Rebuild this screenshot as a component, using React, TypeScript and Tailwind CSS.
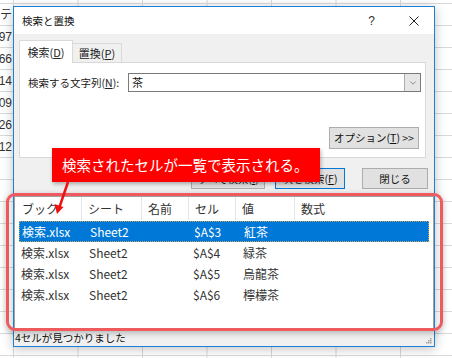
import { ChevronDown } from 'lucide-react';

const rows = [
  { book: '検索.xlsx', sheet: 'Sheet2', cell: '$A$3', value: '紅茶' },
  { book: '検索.xlsx', sheet: 'Sheet2', cell: '$A$4', value: '緑茶' },
  { book: '検索.xlsx', sheet: 'Sheet2', cell: '$A$5', value: '烏龍茶' },
  { book: '検索.xlsx', sheet: 'Sheet2', cell: '$A$6', value: '檸檬茶' },
];

const sideCells = ['テ', '97', '66', '14', '09', '26', '12'];

export default function App() {
  return (
    <div className="relative w-[452px] h-[358px] overflow-hidden flex items-start bg-white bg-[linear-gradient(to_right,#d9d9d9_1px,transparent_1px),linear-gradient(to_bottom,#d9d9d9_1px,transparent_1px)] bg-[length:64.5px_22px] bg-[position:13px_3px] font-['Noto_Sans_CJK_JP',sans-serif] text-[#222]">
      {/* sheet cells peeking out left of the dialog */}
      <div className="w-[13px] shrink-0 pt-[4px] overflow-hidden">
        {sideCells.map((c) => (
          <div key={c} className="h-[22px] flex items-center justify-end pr-[1px] text-[12px] leading-none font-['Liberation_Sans','Noto_Sans_CJK_JP',sans-serif] text-[#333]">
            {c}
          </div>
        ))}
      </div>

      {/* Find & Replace dialog */}
      <div className="mt-[6px] w-[422px] shrink-0 border border-[#1b80d6] bg-[#f0f0f0] shadow-[0_2px_10px_rgba(0,0,0,0.25)]">
        {/* title bar */}
        <div className="h-[27px] bg-white flex items-center pl-[8px]">
          <span className="text-[10.5px] text-[#111]">検索と置換</span>
          <span className="ml-auto mr-[34px] text-[12px] text-[#333] font-['Liberation_Sans',sans-serif]">?</span>
          <svg width="10" height="10" viewBox="0 0 10 10" className="mr-[15px]">
            <path d="M0.5 0.5L9.5 9.5M9.5 0.5L0.5 9.5" stroke="#222" strokeWidth="1" />
          </svg>
        </div>

        {/* tabs */}
        <div className="pt-[6px] pl-[5px] pr-[8px]">
          <div className="flex items-end h-[22px]">
            <div className="relative z-10 w-[54px] h-[23px] mb-[-1px] bg-white border border-[#d9d9d9] border-b-0 flex items-center justify-center text-[11px] text-[#222]">
              検索(<span className="underline">D</span>)
            </div>
            <div className="w-[49px] h-[19px] border border-[#d9d9d9] border-b-0 border-l-0 flex items-center justify-center text-[11px] text-[#222]">
              置換(<span className="underline">P</span>)
            </div>
          </div>

          {/* tab panel */}
          <div className="h-[96px] bg-white border border-[#d9d9d9] pt-[10px]">
            <div className="flex items-center">
              <div className="w-[108px] pl-[8px] text-[10.5px] text-[#222]">
                検索する文字列(<span className="underline">N</span>):
              </div>
              <div className="w-[293px] h-[19px] border border-[#7a7a7a] flex items-center">
                <span className="pl-[3px] text-[11px] text-[#111]">茶</span>
                <div className="ml-auto w-[16px] h-full bg-[#e6e6e6] border-l border-[#adadad] flex items-center justify-center">
                  <ChevronDown size={10} strokeWidth={1.5} color="#555" />
                </div>
              </div>
            </div>
            <div className="flex justify-end pr-[6px] mt-[35px]">
              <div className="w-[90px] h-[22px] bg-[#e1e1e1] border border-[#adadad] flex items-center justify-center text-[10.5px] text-[#111]">
                オプション(<span className="underline">T</span>) &gt;&gt;
              </div>
            </div>
          </div>
        </div>

        {/* action buttons */}
        <div className="flex mt-[10px] h-[21px] pl-[177px] gap-[10px]">
          <div className="w-[74px] h-[21px] bg-[#e1e1e1] border border-[#adadad] flex items-center justify-center text-[10.5px] text-[#111]">
            すべて検索(<span className="underline">I</span>)
          </div>
          <div className="w-[70px] h-[21px] bg-[#e1e1e1] border border-[#0078d7] flex items-center justify-center text-[10.5px] text-[#111]">
            次を検索(<span className="underline">F</span>)
          </div>
          <div className="ml-[7px] w-[66px] h-[21px] bg-[#e1e1e1] border border-[#adadad] flex items-center justify-center text-[10.5px] text-[#111]">
            閉じる
          </div>
        </div>

        {/* results list */}
        <div className="mt-[7px] h-[134px] bg-white border border-[#a0a0a0] text-[12px] text-[#333]">
          <div className="grid grid-cols-[67px_60px_47px_47px_59px_1fr] h-[23px] items-stretch">
            {['ブック', 'シート', '名前', 'セル', '値', '数式'].map((h, i) => (
              <div
                key={h}
                className={`flex items-center ${i === 0 ? 'pl-[7px]' : 'pl-[6px]'} ${i < 5 ? 'border-r border-[#e5e5e5]' : ''}`}
              >
                {h}
              </div>
            ))}
          </div>
          <div className="px-[4px] pt-[1px]">
            {rows.map((r, i) => (
              <div
                key={r.cell}
                className={`grid grid-cols-[63px_60px_47px_47px_59px_1fr] h-[21px] items-center ${
                  i === 0 ? 'bg-[#0078d7] text-white border border-dotted border-[#c9a55a]' : ''
                }`}
              >
                <span className="pl-[2px]">{r.book}</span>
                <span className="pl-[7px]">{r.sheet}</span>
                <span />
                <span className="pl-[4px]">{r.cell}</span>
                <span className="pl-[7px]">{r.value}</span>
                <span />
              </div>
            ))}
          </div>
        </div>

        {/* status bar */}
        <div className="relative h-[16px] flex items-center pl-[1px] text-[10.5px] text-[#111]">
          4セルが見つかりました
          <svg width="6" height="6" viewBox="0 0 6 6" className="absolute right-[2px] bottom-[2px]">
            <rect x="4" y="0" width="1.5" height="1.5" fill="#a0a0a0" />
            <rect x="2" y="2" width="1.5" height="1.5" fill="#a0a0a0" />
            <rect x="4" y="2" width="1.5" height="1.5" fill="#a0a0a0" />
            <rect x="0" y="4" width="1.5" height="1.5" fill="#a0a0a0" />
            <rect x="2" y="4" width="1.5" height="1.5" fill="#a0a0a0" />
            <rect x="4" y="4" width="1.5" height="1.5" fill="#a0a0a0" />
          </svg>
        </div>
      </div>

      {/* red highlight around the result list */}
      <div className="absolute left-[6px] top-[193px] w-[437px] h-[138px] border-[3px] border-[#f05a5e] rounded-[9px] shadow-[0_2px_6px_rgba(0,0,0,0.25)]" />

      {/* callout */}
      <div className="absolute left-[52px] top-[148px] w-[268px] h-[34px] bg-[#ff0000] shadow-[1px_2px_4px_rgba(0,0,0,0.3)] flex items-center pl-[10px] text-white text-[14.5px] leading-none">
        検索されたセルが一覧で表示される。
      </div>
      <svg className="absolute left-[48px] top-[180px]" width="30" height="40" viewBox="0 0 30 40">
        <path d="M20 2L11.5 27" stroke="#ee1111" strokeWidth="2.5" fill="none" />
        <path d="M9 34L6.5 24L15.5 27Z" fill="#ee1111" />
      </svg>
    </div>
  );
}
